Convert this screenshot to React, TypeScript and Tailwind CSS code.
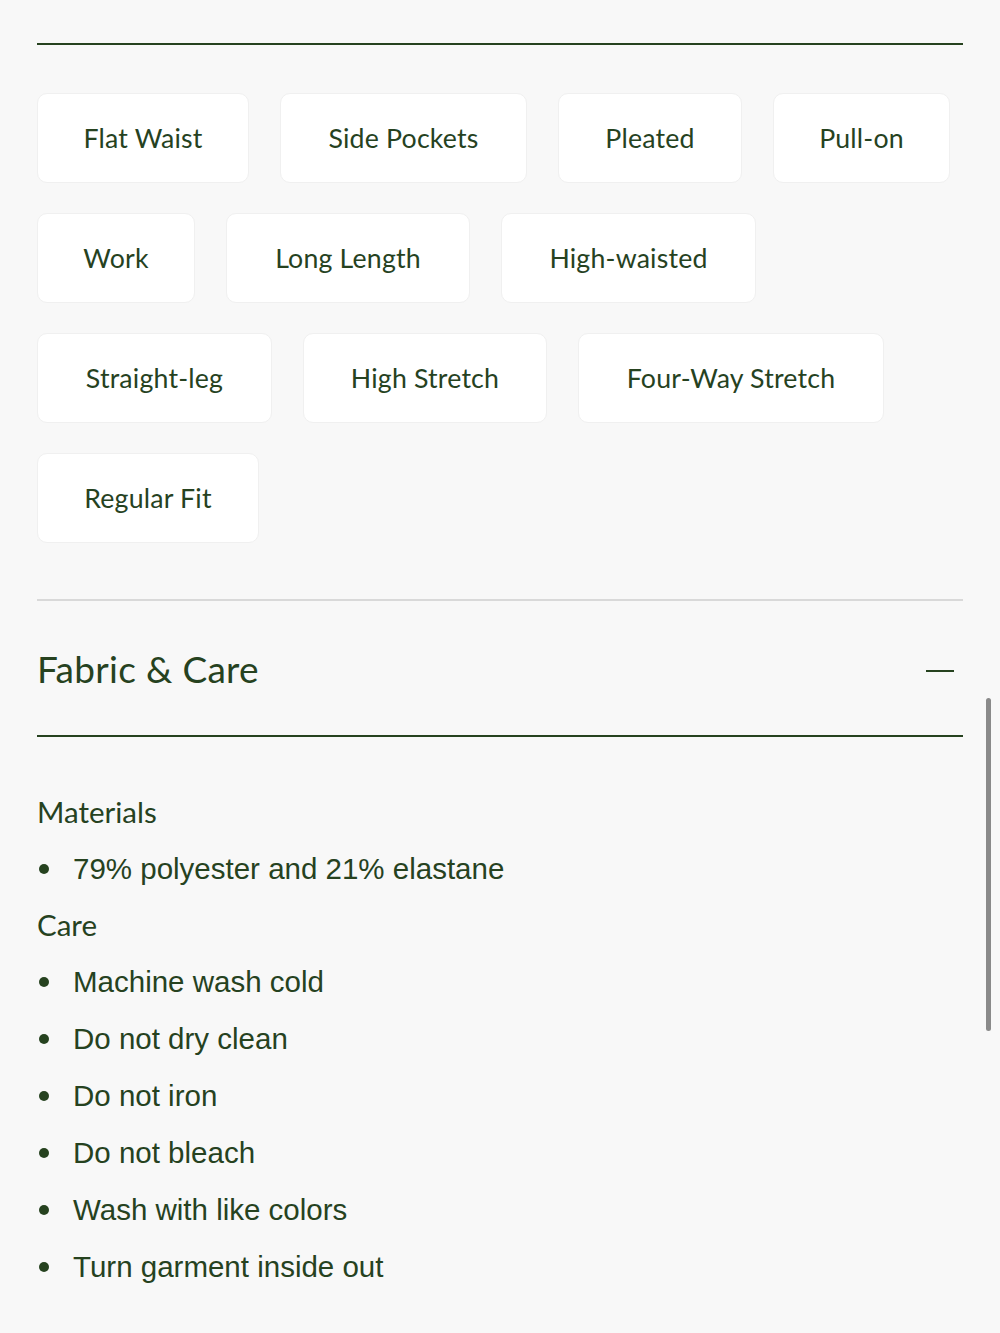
import React from "react";

type Chip = { label: string; width: string };

const chipRows: Chip[][] = [
  [
    { label: "Flat Waist", width: "w-[212px]" },
    { label: "Side Pockets", width: "w-[247px]" },
    { label: "Pleated", width: "w-[184px]" },
    { label: "Pull-on", width: "w-[177px]" },
  ],
  [
    { label: "Work", width: "w-[158px]" },
    { label: "Long Length", width: "w-[244px]" },
    { label: "High-waisted", width: "w-[255px]" },
  ],
  [
    { label: "Straight-leg", width: "w-[235px]" },
    { label: "High Stretch", width: "w-[244px]" },
    { label: "Four-Way Stretch", width: "w-[306px]" },
  ],
  [{ label: "Regular Fit", width: "w-[222px]" }],
];

const materials = ["79% polyester and 21% elastane"];
const care = [
  "Machine wash cold",
  "Do not dry clean",
  "Do not iron",
  "Do not bleach",
  "Wash with like colors",
  "Turn garment inside out",
];

function Bullet({ text }: { text: string }) {
  return (
    <li className="flex h-[57px] items-center">
      <span className="ml-[2px] h-[10px] w-[10px] shrink-0 rounded-full bg-[#26421f]" />
      <span className="ml-[24px] font-['Liberation_Sans',Arial,sans-serif] text-[29.5px] leading-none">
        {text}
      </span>
    </li>
  );
}

export default function App() {
  return (
    <div className="relative min-h-[1333px] w-[1000px] bg-[#f8f8f8] font-['Lato','Noto_Sans',sans-serif] text-[#26421f]">
      <div className="px-[37px] pt-[43px]">
        <div className="h-[2px] bg-[#26421f]" />

        {/* attribute chips */}
        <div className="mt-[48px] flex flex-col gap-[30px]">
          {chipRows.map((row, i) => (
            <div key={i} className="flex gap-[31px]">
              {row.map((c) => (
                <div
                  key={c.label}
                  className={`${c.width} flex h-[90px] items-center justify-center rounded-[10px] border border-[#f0f0f0] bg-white text-[26.7px] tracking-[0.2px]`}
                >
                  {c.label}
                </div>
              ))}
            </div>
          ))}
        </div>

        <div className="mt-[56px] h-[2px] bg-[#d9d9d9]" />

        {/* accordion header */}
        <div className="flex h-[134px] items-center justify-between">
          <h2 className="text-[37px] font-normal leading-none tracking-[0.3px]">Fabric &amp; Care</h2>
          <span className="mr-[9px] mt-[6px] h-[2px] w-[28px] bg-[#26421f]" />
        </div>
        <div className="h-[2px] bg-[#26421f]" />

        {/* accordion body */}
        <div className="pt-[47px]">
          <div className="flex h-[56px] items-center text-[29.5px] leading-none">Materials</div>
          <ul>
            {materials.map((m) => (
              <Bullet key={m} text={m} />
            ))}
          </ul>
          <div className="flex h-[56px] items-center text-[29.5px] leading-none">Care</div>
          <ul>
            {care.map((m) => (
              <Bullet key={m} text={m} />
            ))}
          </ul>
        </div>
      </div>

      {/* scroll indicator */}
      <div className="absolute left-[986px] top-[698px] h-[333px] w-[5px] rounded-full bg-[#8a8a8a]" />
    </div>
  );
}
